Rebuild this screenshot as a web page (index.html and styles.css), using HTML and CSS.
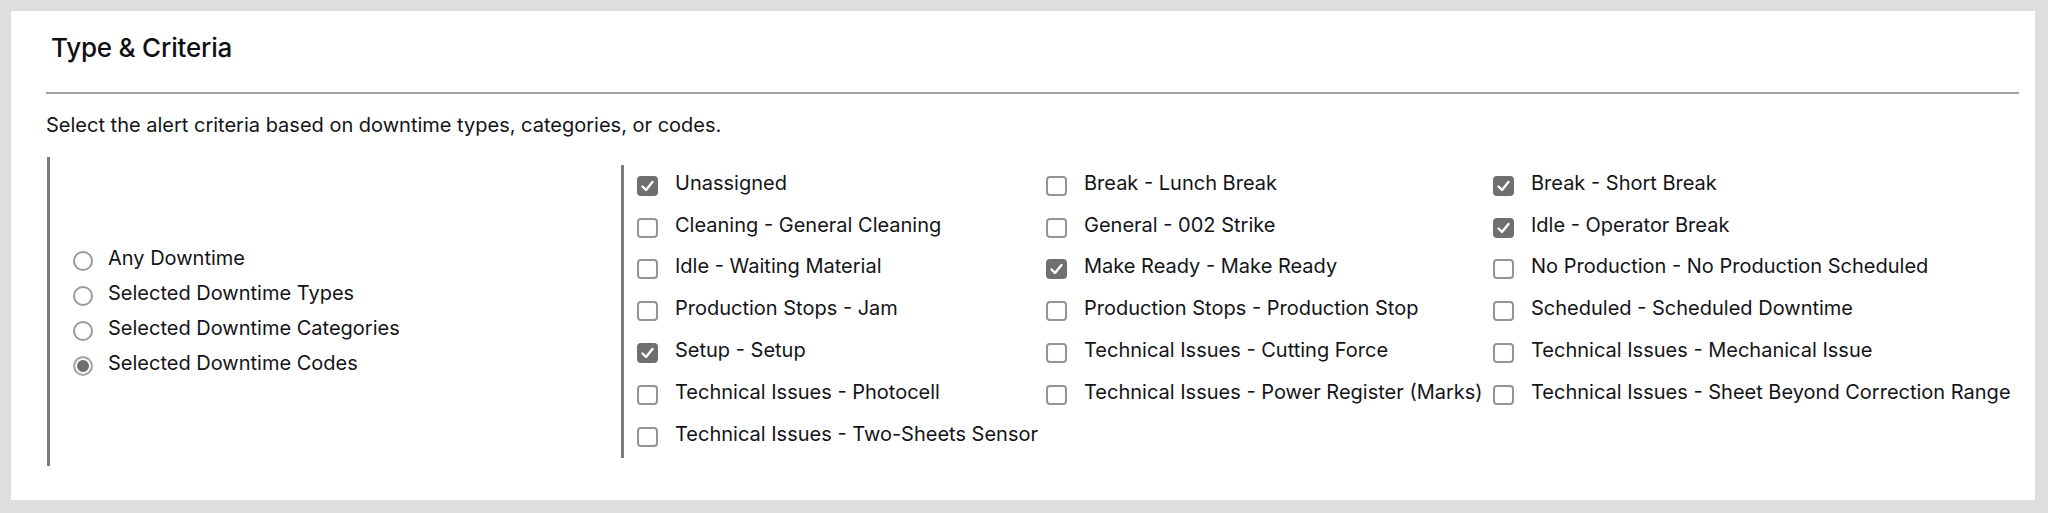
FILE: index.html
```html
<!DOCTYPE html>
<html lang="en">
<head>
<meta charset="utf-8">
<title>Type &amp; Criteria</title>
<link rel="stylesheet" href="styles.css">
</head>
<body>
<section class="panel">
  <h2 class="title">Type &amp; Criteria</h2>
  <hr class="rule">
  <p class="intro">Select the alert criteria based on downtime types, categories, or codes.</p>
  <div class="criteria">
    <div class="modes">
      <label class="mode"><span class="radio"></span><span class="txt">Any Downtime</span></label>
      <label class="mode"><span class="radio"></span><span class="txt">Selected Downtime Types</span></label>
      <label class="mode"><span class="radio"></span><span class="txt">Selected Downtime Categories</span></label>
      <label class="mode"><span class="radio on"></span><span class="txt">Selected Downtime Codes</span></label>
    </div>
    <div class="codes">
      <label class="opt"><span class="box on"><svg viewBox="0 0 20 20"><polyline points="5,10.5 8.5,14 15,6"/></svg></span><span class="txt">Unassigned</span></label>
      <label class="opt"><span class="box"></span><span class="txt">Break - Lunch Break</span></label>
      <label class="opt"><span class="box on"><svg viewBox="0 0 20 20"><polyline points="5,10.5 8.5,14 15,6"/></svg></span><span class="txt">Break - Short Break</span></label>

      <label class="opt"><span class="box"></span><span class="txt">Cleaning - General Cleaning</span></label>
      <label class="opt"><span class="box"></span><span class="txt">General - 002 Strike</span></label>
      <label class="opt"><span class="box on"><svg viewBox="0 0 20 20"><polyline points="5,10.5 8.5,14 15,6"/></svg></span><span class="txt">Idle - Operator Break</span></label>

      <label class="opt"><span class="box"></span><span class="txt">Idle - Waiting Material</span></label>
      <label class="opt"><span class="box on"><svg viewBox="0 0 20 20"><polyline points="5,10.5 8.5,14 15,6"/></svg></span><span class="txt">Make Ready - Make Ready</span></label>
      <label class="opt"><span class="box"></span><span class="txt">No Production - No Production Scheduled</span></label>

      <label class="opt"><span class="box"></span><span class="txt">Production Stops - Jam</span></label>
      <label class="opt"><span class="box"></span><span class="txt">Production Stops - Production Stop</span></label>
      <label class="opt"><span class="box"></span><span class="txt">Scheduled - Scheduled Downtime</span></label>

      <label class="opt"><span class="box on"><svg viewBox="0 0 20 20"><polyline points="5,10.5 8.5,14 15,6"/></svg></span><span class="txt">Setup - Setup</span></label>
      <label class="opt"><span class="box"></span><span class="txt">Technical Issues - Cutting Force</span></label>
      <label class="opt"><span class="box"></span><span class="txt">Technical Issues - Mechanical Issue</span></label>

      <label class="opt"><span class="box"></span><span class="txt">Technical Issues - Photocell</span></label>
      <label class="opt"><span class="box"></span><span class="txt">Technical Issues - Power Register (Marks)</span></label>
      <label class="opt"><span class="box"></span><span class="txt">Technical Issues - Sheet Beyond Correction Range</span></label>

      <label class="opt"><span class="box"></span><span class="txt">Technical Issues - Two-Sheets Sensor</span></label>
    </div>
  </div>
</section>
</body>
</html>
```

FILE: styles.css
```css
html, body {
  margin: 0;
  padding: 0;
}
body {
  background: #dedede;
  font-family: Inter, "Noto Sans", "Liberation Sans", sans-serif;
  color: #141418;
  padding: 11px 13px 13px 11px;
  height: 513px;
  box-sizing: border-box;
}
.panel {
  background: #ffffff;
  height: 489px;
  box-sizing: border-box;
  padding: 21px 16px 0 35px;
}
.title {
  margin: 0 0 29px 5px;
  font-size: 26px;
  line-height: 31px;
  font-weight: 500;
  letter-spacing: -0.2px;
  color: #101014;
}
.rule {
  margin: 0;
  border: 0;
  height: 2px;
  background: #a3a3a3;
}
.intro {
  margin: 19px 0 0 0;
  font-size: 20px;
  line-height: 25px;
}
.criteria {
  margin-top: 19px;
  margin-left: 1px;
  display: flex;
  align-items: stretch;
}
.modes {
  width: 574px;
  border-left: 3px solid #7b7b7b;
  display: flex;
  flex-direction: column;
  justify-content: center;
  padding: 4px 0 0 23px;
  box-sizing: border-box;
  gap: 15px;
}
.mode {
  display: flex;
  align-items: center;
  height: 20px;
}
.radio {
  width: 20px;
  height: 20px;
  box-sizing: border-box;
  border: 2px solid #9a9a9a;
  border-radius: 50%;
  margin-right: 15px;
  flex: none;
  background: #fff;
}
.radio.on {
  background: #6e6e6e;
  box-shadow: inset 0 0 0 2px #ffffff;
  border-color: #a8a8a8;
}
.mode .txt {
  font-size: 20px;
  padding-bottom: 6px;
  white-space: nowrap;
}
.codes {
  margin: 8px 0;
  border-left: 3px solid #7b7b7b;
  padding-left: 13px;
  display: grid;
  grid-template-columns: 409px 447px auto;
  grid-auto-rows: 41.8px;
}
.opt {
  display: flex;
  align-items: center;
}
.box {
  width: 21px;
  height: 20px;
  box-sizing: border-box;
  border: 2px solid #949494;
  border-radius: 4px;
  margin-right: 17px;
  flex: none;
  background: #fff;
  display: flex;
}
.box.on {
  background: #6f6f6f;
  border-color: #6f6f6f;
}
.box svg {
  margin: -2px;
  width: 21px;
  height: 20px;
}
.box polyline {
  fill: none;
  stroke: #ffffff;
  stroke-width: 2.4;
  stroke-linecap: round;
  stroke-linejoin: round;
}
.opt .txt {
  font-size: 20px;
  padding-bottom: 6px;
  white-space: nowrap;
}
```
